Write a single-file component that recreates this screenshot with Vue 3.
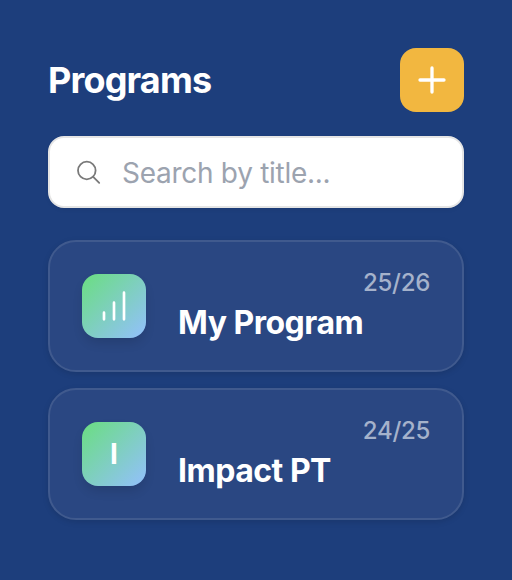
<script setup>
import { ref } from 'vue'

const query = ref('')
const programs = [
  { title: 'My Program', season: '25/26', chart: true },
  { title: 'Impact PT', season: '24/25', chart: false },
]
</script>

<template>
  <main class="panel">
    <header class="header">
      <h1 class="heading">Programs</h1>
      <button class="add" type="button">
        <svg width="40" height="40" viewBox="0 0 40 40">
          <path d="M20 8v24M8 20h24" />
        </svg>
      </button>
    </header>

    <label class="search">
      <svg width="28" height="28" viewBox="0 0 28 28">
        <circle cx="11.8" cy="12.5" r="8.8" />
        <path d="M18.2 18.9l6 6" />
      </svg>
      <input v-model="query" type="text" placeholder="Search by title..." />
    </label>

    <section class="list">
      <article v-for="p in programs" :key="p.title" class="card">
        <div class="badge">
          <svg v-if="p.chart" width="40" height="40" viewBox="0 0 24 24">
            <path d="M6 20v-4M12 20V10M18 20V4" />
          </svg>
          <span v-else>{{ p.title[0] }}</span>
        </div>
        <div class="info">
          <span class="season">{{ p.season }}</span>
          <h2 class="title">{{ p.title }}</h2>
        </div>
      </article>
    </section>
  </main>
</template>

<style>
body {
  background: #1d3e7c;
}
</style>

<style scoped>
* {
  box-sizing: border-box;
}
.panel {
  min-height: 580px;
  padding: 48px;
  background: #1d3e7c;
  font-family: Inter, "Liberation Sans", sans-serif;
  color: #fff;
}
.header {
  display: flex;
  align-items: center;
  justify-content: space-between;
  height: 64px;
}
.heading {
  margin: 0;
  font-size: 36px;
  line-height: 56px;
  font-weight: 650;
  letter-spacing: -0.85px;
}
.add {
  display: grid;
  place-items: center;
  width: 64px;
  height: 64px;
  padding: 0;
  border: 0;
  border-radius: 16px;
  background: #f2b740;
}
svg {
  display: block;
  fill: none;
  stroke: #fff;
  stroke-width: 3.3;
  stroke-linecap: round;
  stroke-linejoin: round;
}
.search {
  display: flex;
  align-items: center;
  gap: 19px;
  height: 72px;
  margin-top: 24px;
  padding: 0 25px;
  border: 2px solid #e5e5e5;
  border-radius: 16px;
  background: #fff;
  box-shadow: 0 2px 4px rgba(0, 0, 0, 0.05);
}
.search svg {
  flex: none;
  stroke: #797979;
  stroke-width: 1.8;
}
.search input {
  flex: 1;
  min-width: 0;
  padding: 2px 0 0;
  border: 0;
  outline: 0;
  background: transparent;
  font: 420 28px/40px Inter, "Liberation Sans", sans-serif;
  letter-spacing: -0.28px;
}
.search input::placeholder {
  color: #9ca3af;
  opacity: 1;
}
.list {
  display: grid;
  gap: 16px;
  margin-top: 32px;
}
.card {
  display: flex;
  align-items: center;
  gap: 32px;
  height: 132px;
  padding: 0 32px;
  border: 2px solid #405a8e;
  border-radius: 28px;
  background: #2a4782;
  box-shadow: 0 2px 6px rgba(0, 0, 0, 0.12);
}
.badge {
  display: grid;
  flex: none;
  place-items: center;
  width: 64px;
  height: 64px;
  border-radius: 16px;
  background: linear-gradient(135deg, #6ade80, #93c0fd);
  box-shadow: 0 6px 12px -2px rgba(0, 0, 0, 0.14);
  font-size: 28px;
  font-weight: 700;
}
.badge svg {
  stroke-width: 1.6;
}
.info {
  display: flex;
  flex: 1;
  flex-direction: column;
}
.season {
  align-self: flex-end;
  color: #a5b2cb;
  font-size: 24px;
  font-weight: 450;
  line-height: 32px;
  letter-spacing: -0.3px;
}
.title {
  margin: 2px 0 0;
  font-size: 32px;
  line-height: 44px;
  font-weight: 650;
  letter-spacing: -0.5px;
}
</style>
